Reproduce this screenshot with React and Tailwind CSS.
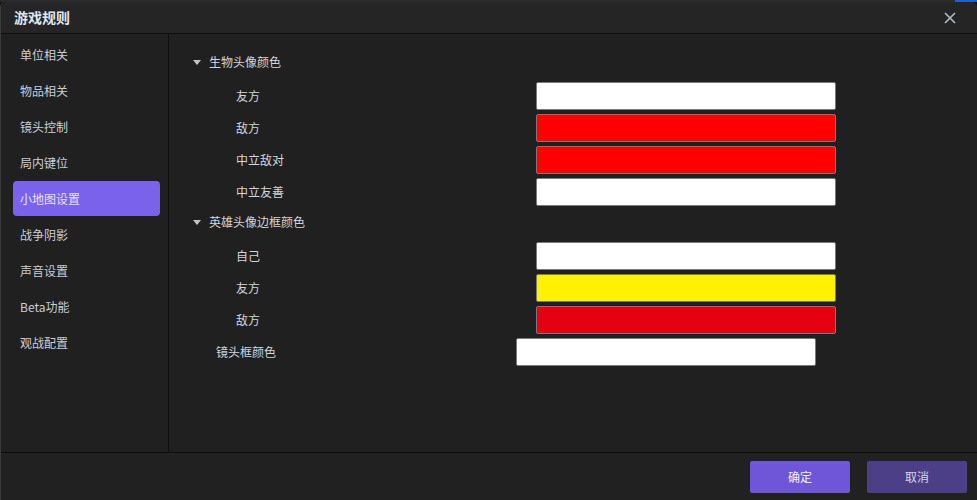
import React from "react";

const font = { fontFamily: '"Noto Sans CJK SC", "Noto Sans", sans-serif' };

const menu = ["单位相关", "物品相关", "镜头控制", "局内键位", "小地图设置", "战争阴影", "声音设置", "Beta功能", "观战配置"];

function Tri() {
  return (
    <svg width="8" height="5" viewBox="0 0 8 5" className="shrink-0">
      <path d="M0 0 L8 0 L4 5 Z" fill="#c4c4c4" />
    </svg>
  );
}

function Row({ label, color, indent = 67, inputLeft = 367 }) {
  return (
    <div className="flex items-center h-[32px]">
      <div className="shrink-0 text-[12px] text-[#d2d6de]" style={{ width: inputLeft, paddingLeft: indent }}>{label}</div>
      <div className="w-[300px] h-[28px] rounded-[2px] border border-[#7a7a7a]" style={{ background: color }} />
    </div>
  );
}

function Header({ label }) {
  return (
    <div className="flex items-center h-[28px] pl-[24px] gap-[8px]">
      <Tri />
      <span className="text-[12px] text-[#d2d6de]">{label}</span>
    </div>
  );
}

export default function App() {
  return (
    <div className="w-[977px] h-[500px] bg-[#151515] overflow-hidden flex flex-col" style={font}>
      <div className="h-[2px] shrink-0 flex">
        <div className="flex-1 bg-[#2a2a2e]" />
        <div className="w-[22px] bg-[#1f5fd0]" />
      </div>
      <div className="flex-1 flex flex-col bg-[#202020] rounded-t-[5px] border-l border-[#3a3a3a] overflow-hidden">
        <div className="h-[32px] shrink-0 flex items-center justify-between pl-[13px] pr-[21px] bg-[#252525] border-b border-[#0e0e0e]">
          <span className="text-[14px] font-semibold text-[#dfe5f2]">游戏规则</span>
          <svg width="12" height="12" viewBox="0 0 12 12">
            <path d="M1 1 L11 11 M11 1 L1 11" stroke="#aeb6c6" strokeWidth="1.7" />
          </svg>
        </div>
        <div className="flex-1 flex min-h-0">
          <div className="w-[168px] shrink-0 border-r border-[#0e0e0e] pt-[3px]">
            {menu.map((m, i) => (
              <div key={m} className="h-[36px] flex items-start">
                <div
                  className={
                    "ml-[12px] w-[147px] h-[35px] flex items-center px-[7px] text-[12px] rounded-[4px] " +
                    (i === 4 ? "bg-[#7b62ea] text-[#e4e0fa]" : "text-[#c8ced8]")
                  }
                >
                  {m}
                </div>
              </div>
            ))}
          </div>
          <div className="flex-1 pt-[14px]">
            <Header label="生物头像颜色" />
            <div className="h-[4px]" />
            <Row label="友方" color="#ffffff" />
            <Row label="敌方" color="#ff0000" />
            <Row label="中立敌对" color="#ff0000" />
            <Row label="中立友善" color="#ffffff" />
            <Header label="英雄头像边框颜色" />
            <div className="h-[4px]" />
            <Row label="自己" color="#ffffff" />
            <Row label="友方" color="#fff200" />
            <Row label="敌方" color="#e50012" />
            <Row label="镜头框颜色" color="#ffffff" indent={47} inputLeft={347} />
          </div>
        </div>
        <div className="h-[48px] shrink-0 border-t border-[#0e0e0e] flex items-center justify-end gap-[17px] pr-[10px] bg-[#212121]">
          <button className="w-[100px] h-[32px] rounded-[2px] bg-[#6f56d8] text-[12px] text-[#f2f0fc]">确定</button>
          <button className="w-[100px] h-[32px] rounded-[2px] bg-[#4c3f88] text-[12px] text-[#d8d4ec]">取消</button>
        </div>
      </div>
    </div>
  );
}
